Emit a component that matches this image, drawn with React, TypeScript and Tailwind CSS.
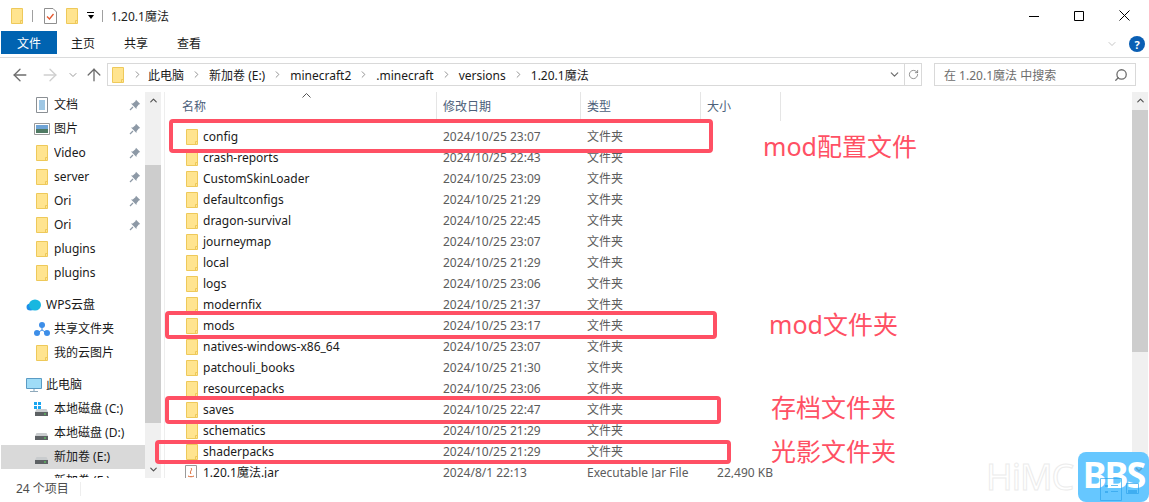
import { ChevronDown, ChevronUp, ArrowLeft, ArrowRight, ArrowUp, ChevronRight, RotateCw, Search } from "lucide-react";

const FONT = "font-['Noto_Sans','Noto_Sans_CJK_SC',sans-serif]";

function Folder({ className = "" }: { className?: string }) {
  return (
    <svg width="12" height="16" viewBox="0 0 12 16" className={`shrink-0 ${className}`}>
      <path d="M.5.5h11v15H.5z" fill="#ffe48f" stroke="#eec95a" />
      <path d="M9.5 15.5v-3h2" fill="none" stroke="#eec95a" />
    </svg>
  );
}

function Pin() {
  return (
    <svg width="12" height="12" viewBox="0 0 12 12" className="shrink-0">
      <path d="M7 .8 11.2 5 9.8 5.6 7.6 8.2 7.4 10 2 4.6 3.8 4.4 6.4 2.2z" fill="#8d99a6" />
      <path d="M4 8 1 11" stroke="#8d99a6" strokeWidth="1.2" />
    </svg>
  );
}

function Drive({ win }: { win?: boolean }) {
  return (
    <svg width="16" height="16" viewBox="0 0 16 16" className="shrink-0">
      {win && <path d="M0 1h3v3H0zM4 1h3v3H4zM0 5h3v3H0zM4 5h3v3H4z" fill="#19a5f0" />}
      <path d="M2.5 8h10l1.5 3H1z" fill="#c9ccce" />
      <path d="M1 11h13v4H1z" fill="#5d6164" />
      <path d="M10 12.5h2v1h-2z" fill="#5be05b" />
    </svg>
  );
}

function NavItem({ label, pinned, icon, active }: { label: string; pinned?: boolean; icon?: React.ReactNode; active?: boolean }) {
  return (
    <div className={`flex h-6 shrink-0 items-center ${active ? "bg-[#d9d9d9]" : ""}`}>
      <div className="ml-[33px] flex w-[20px] shrink-0 items-center">{icon ?? <Folder className="ml-[2px]" />}</div>
      <span className="flex-1 truncate text-[#1a1a1a]">{label}</span>
      {pinned && <div className="mr-[4px]"><Pin /></div>}
    </div>
  );
}

const quick = [
  {
    label: "文档",
    icon: (
      <svg width="12" height="16" viewBox="0 0 12 16" className="ml-[2px]">
        <path d="M.5.5h11v15H.5z" fill="#fff" stroke="#8a8f94" />
        <path d="M3 4h6M3 6h6M3 8h6M3 10h6M3 12h6" stroke="#3f8fc9" />
      </svg>
    ),
  },
  {
    label: "图片",
    icon: (
      <svg width="16" height="12" viewBox="0 0 16 12">
        <path d="M.5.5h15v11H.5z" fill="#fff" stroke="#9a9a9a" />
        <path d="M2 2h12v4H2z" fill="#6fa4d6" />
        <path d="M2 6h12v4H2z" fill="#4f7a63" />
      </svg>
    ),
  },
  { label: "Video" },
  { label: "server" },
  { label: "Ori" },
  { label: "Ori" },
];

const rows = [
  ["config", "2024/10/25 23:07"],
  ["crash-reports", "2024/10/25 22:43"],
  ["CustomSkinLoader", "2024/10/25 23:09"],
  ["defaultconfigs", "2024/10/25 21:29"],
  ["dragon-survival", "2024/10/25 22:45"],
  ["journeymap", "2024/10/25 23:07"],
  ["local", "2024/10/25 21:29"],
  ["logs", "2024/10/25 23:06"],
  ["modernfix", "2024/10/25 21:37"],
  ["mods", "2024/10/25 23:17"],
  ["natives-windows-x86_64", "2024/10/25 23:07"],
  ["patchouli_books", "2024/10/25 21:30"],
  ["resourcepacks", "2024/10/25 23:06"],
  ["saves", "2024/10/25 22:47"],
  ["schematics", "2024/10/25 21:29"],
  ["shaderpacks", "2024/10/25 21:29"],
];

const crumbs = ["此电脑", "新加卷 (E:)", "minecraft2", ".minecraft", "versions", "1.20.1魔法"];

export default function App() {
  return (
    <div className={`relative flex h-[502px] w-[1149px] flex-col overflow-hidden bg-white text-[12px] text-[#1a1a1a] ${FONT}`}>
      {/* title bar */}
      <div className="flex h-[31px] shrink-0 items-center pl-[11px]">
        <Folder />
        <div className="ml-[9px] h-[12px] w-px bg-[#a0a0a0]" />
        <svg width="13" height="16" viewBox="0 0 13 16" className="ml-[11px]">
          <path d="M.5.5h8.5l3.5 3.5v11.500h-12z" fill="#fff" stroke="#8f8f8f" />
          <path d="M3 8.500 5.500 11 9.500 6" fill="none" stroke="#e4572e" strokeWidth="1.3" />
        </svg>
        <Folder className="ml-[9px]" />
        <div className="ml-[9px] flex flex-col items-center">
          <div className="mb-[2px] h-px w-[7px] bg-black" />
          <div className="h-0 w-0 border-x-[3.5px] border-t-[4px] border-x-transparent border-t-black" />
        </div>
        <div className="ml-[8px] h-[12px] w-px bg-[#a0a0a0]" />
        <span className="ml-[8px] mt-[2px] text-[12px] text-[#222]">1.20.1魔法</span>
        <div className="ml-auto mr-[19px] flex items-center gap-[35px] text-black">
          <svg width="10" height="10" viewBox="0 0 10 10"><path d="M0 5.500h10" stroke="currentColor" /></svg>
          <svg width="10" height="10" viewBox="0 0 10 10"><path d="M.5.5h9v9h-9z" fill="none" stroke="currentColor" /></svg>
          <svg width="11" height="11" viewBox="0 0 11 11"><path d="M.5.5l10 10M10.500.5l-10 10" stroke="currentColor" /></svg>
        </div>
      </div>

      {/* ribbon tabs */}
      <div className="flex h-[27px] shrink-0 items-start border-b border-[#dadbdc]">
        <div className="ml-px flex h-[23px] w-[56px] items-center justify-center bg-[#0063b1] pt-[3px] text-white">文件</div>
        <span className="ml-[14px] leading-[26px]">主页</span>
        <span className="ml-[29px] leading-[26px]">共享</span>
        <span className="ml-[29px] leading-[26px]">查看</span>
        <ChevronDown size={12} strokeWidth={1} className="ml-auto mr-[11px] mt-[7px] text-[#8a8a8a]" />
        <div className="mr-[4px] mt-[5px] flex h-4 w-4 items-center justify-center rounded-full bg-[#0a5fb4] text-[11px] font-bold leading-none text-white">?</div>
      </div>

      {/* address bar */}
      <div className="flex h-[34px] shrink-0 items-start pt-[5px]">
        <div className="flex h-[23px] items-center">
          <ArrowLeft size={20} strokeWidth={1.6} className="ml-[10px] text-[#6d6d6d]" />
          <ArrowRight size={20} strokeWidth={1.6} className="ml-[10px] text-[#cfcfcf]" />
          <ChevronDown size={12} strokeWidth={2} className="ml-[7px] text-[#9a9a9a]" />
          <ArrowUp size={20} strokeWidth={1.6} className="ml-[5px] text-[#6d6d6d]" />
        </div>
        <div className="ml-[3px] flex h-[23px] w-[815px] items-center border border-[#d9d9d9] pl-[4px]">
          <Folder />
          {crumbs.map((c, i) => (
            <div key={c} className="flex items-center">
              <ChevronRight size={11} strokeWidth={2} className={`text-[#8a8a8a] ${i === 0 ? "ml-[8px] mr-[5px]" : "mx-[7px]"}`} />
              <span className="pt-[2px]">{c}</span>
            </div>
          ))}
          <ChevronDown size={13} strokeWidth={2.2} className="ml-auto mr-[3px] text-[#6d6d6d]" />
          <div className="flex h-full w-[17px] items-center justify-center border-l border-[#d9d9d9]">
            <RotateCw size={11} strokeWidth={1.6} className="text-[#6d6d6d]" />
          </div>
        </div>
        <div className="ml-[12px] flex h-[23px] w-[202px] items-center justify-between border border-[#d9d9d9] pl-[9px] pr-[7px] text-[#6d6d6d]">
          <span className="pt-[2px]">在 1.20.1魔法 中搜索</span>
          <Search size={14} strokeWidth={2.2} className="-scale-x-100" />
        </div>
      </div>

      {/* main */}
      <div className="flex h-[386px] shrink-0">
        {/* nav pane */}
        <div className="flex w-[145px] shrink-0 flex-col overflow-hidden pl-px pt-px">
          {quick.map((q, i) => (
            <NavItem key={i} label={q.label} icon={q.icon} pinned />
          ))}
          <NavItem label="plugins" />
          <NavItem label="plugins" />
          <div className="h-[8px] shrink-0" />
          <div className="flex h-6 shrink-0 items-center pl-[25px]">
            <svg width="16" height="12" viewBox="0 0 16 12" className="mr-[4px]">
              <ellipse cx="4.500" cy="8" rx="4" ry="3.500" fill="#1f8fe8" />
              <ellipse cx="9" cy="6" rx="6" ry="5.500" fill="#18b7e0" />
            </svg>
            WPS云盘
          </div>
          <NavItem
            label="共享文件夹"
            icon={
              <svg width="16" height="14" viewBox="0 0 16 14">
                <circle cx="8" cy="3" r="3" fill="#3d8ee8" />
                <circle cx="3" cy="11" r="3" fill="#3d8ee8" />
                <circle cx="13" cy="11" r="3" fill="#3d8ee8" />
                <path d="M8 3v5M8 8 3 11M8 8l5 3" fill="none" stroke="#3d8ee8" />
              </svg>
            }
          />
          <NavItem label="我的云图片" />
          <div className="h-[8px] shrink-0" />
          <div className="flex h-6 shrink-0 items-center pl-[25px]">
            <svg width="16" height="15" viewBox="0 0 16 15" className="mr-[4px]">
              <path d="M.5.500h15v10H.5z" fill="#9fdcf7" stroke="#5a9bc4" />
              <path d="M4 13h8v1H4z" fill="#8fa9bb" />
              <path d="M7 11h2v2H7z" fill="#bcd2df" />
            </svg>
            此电脑
          </div>
          <NavItem label="本地磁盘 (C:)" icon={<Drive win />} />
          <NavItem label="本地磁盘 (D:)" icon={<Drive />} />
          <NavItem label="新加卷 (E:)" icon={<Drive />} active />
          <NavItem label="新加卷 (F:)" icon={<Drive />} />
        </div>

        {/* nav scrollbar */}
        <div className="flex h-full w-[16px] shrink-0 flex-col bg-[#f0f0f0]">
          <div className="flex h-[17px] shrink-0 items-center justify-center"><ChevronUp size={11} strokeWidth={2.5} className="text-[#505050]" /></div>
          <div className="mt-[56px] h-[258px] bg-[#cdcdcd]" />
          <div className="mt-auto flex h-[17px] shrink-0 items-center justify-center"><ChevronDown size={11} strokeWidth={2.5} className="text-[#505050]" /></div>
        </div>
        <div className="ml-[3px] h-full w-px shrink-0 bg-[#eeeeee]" />

        {/* file list */}
        <div className="relative flex min-w-0 flex-1 flex-col overflow-hidden">
          <svg width="9" height="5" viewBox="0 0 9 5" className="absolute left-[137px] top-[1px] text-[#555]">
            <path d="M.5 4.500 4.500.5l4 4" fill="none" stroke="currentColor" />
          </svg>
          <div className="mb-[5px] flex h-[29px] shrink-0 items-center text-[#4c607a]">
            <div className="h-full w-[272px] border-r border-[#e5e5e5] pl-[17px] leading-[29px]">名称</div>
            <div className="h-full w-[144px] border-r border-[#e5e5e5] pl-[6px] leading-[29px]">修改日期</div>
            <div className="h-full w-[120px] border-r border-[#e5e5e5] pl-[6px] leading-[29px]">类型</div>
            <div className="h-full w-[80px] border-r border-[#e5e5e5] pl-[6px] leading-[29px]">大小</div>
          </div>
          {rows.map(([name, date]) => (
            <div key={name} className="flex h-[21px] shrink-0 items-center">
              <div className="flex w-[272px] items-center pl-[21px]">
                <Folder />
                <span className="ml-[5px]">{name}</span>
              </div>
              <div className="w-[144px] pl-[6px] text-[#5c5c5c]">{date}</div>
              <div className="w-[120px] pl-[6px] text-[#5c5c5c]">文件夹</div>
            </div>
          ))}
          <div className="flex h-[21px] shrink-0 items-center">
            <div className="flex w-[272px] items-center pl-[18px]">
              <svg width="16" height="16" viewBox="0 0 16 16" className="shrink-0">
                <path d="M2.500.5h11v15h-11z" fill="#fff" stroke="#9a9a9a" />
                <path d="M5 11c2 1 4 1 6 0M8 3c2 2-2 3 0 6" fill="none" stroke="#d9622b" />
              </svg>
              <span className="ml-[4px]">1.20.1魔法.jar</span>
            </div>
            <div className="w-[144px] pl-[6px] text-[#5c5c5c]">2024/8/1 22:13</div>
            <div className="w-[120px] pl-[6px] text-[#5c5c5c]">Executable Jar File</div>
            <div className="w-[72px] text-right text-[#5c5c5c]">22,490 KB</div>
          </div>
        </div>

        {/* list scrollbar */}
        <div className="mr-px flex h-full w-[16px] shrink-0 flex-col bg-[#f0f0f0]">
          <div className="flex h-[17px] shrink-0 items-center justify-center"><ChevronUp size={11} strokeWidth={2.5} className="text-[#505050]" /></div>
          <div className="mt-px h-[242px] bg-[#cdcdcd]" />
        </div>
      </div>

      {/* status bar */}
      <div className="flex h-[24px] shrink-0 items-center pb-[2px] pl-[16px] text-[#4d4d4d]">
        24 个项目
        <div className="ml-[11px] h-[14px] w-px bg-[#eeeeee]" />
      </div>

      {/* red annotations */}
      <div className="absolute left-[169px] top-[119px] h-[34px] w-[544px] rounded-[4px] border-4 border-[#ff5064]" />
      <div className="absolute left-[165px] top-[311px] h-[28px] w-[552px] rounded-[4px] border-4 border-[#ff5064]" />
      <div className="absolute left-[165px] top-[396px] h-[28px] w-[556px] rounded-[4px] border-4 border-[#ff5064]" />
      <div className="absolute left-[155px] top-[440px] h-[24px] w-[576px] rounded-[4px] border-4 border-[#ff5064]" />
      <span className="absolute left-[763px] top-[128px] text-[25px] leading-[36px] text-[#ff5064]">mod配置文件</span>
      <span className="absolute left-[769px] top-[306px] text-[25px] leading-[36px] text-[#ff5064]">mod文件夹</span>
      <span className="absolute left-[771px] top-[389px] text-[25px] leading-[36px] text-[#ff5064]">存档文件夹</span>
      <span className="absolute left-[771px] top-[433px] text-[25px] leading-[36px] text-[#ff5064]">光影文件夹</span>

      {/* watermark */}
      <span className="absolute left-[986px] top-[455px] text-[36px] leading-[44px] tracking-[-1px] text-white [-webkit-text-stroke:1px_#ececec]">HiMC</span>
      <div className="absolute left-[1078px] top-[452px] flex h-[50px] w-[71px] items-center justify-center rounded-[8px] bg-[#66c7ff] pb-[4px] text-[36px] font-bold leading-none tracking-[-2px] text-white">BBS</div>
      <svg width="46" height="36" viewBox="0 0 46 36" className="absolute left-[1100px] top-[466px] text-[#2fa4ec] opacity-70">
        <path d="M.5 12.500h21v22H.5zM26.500 17.500h12v10h-12z" fill="none" stroke="currentColor" />
        <path d="M5 19h3v2H5zM11 19h7v1h-7zM5 25h3v2H5zM11 25h7v1h-7zM28 24h9v3h-9z" fill="currentColor" />
        <path d="M36 2l3 3 3-3" fill="none" stroke="#5b8fb0" strokeWidth="1.500" />
      </svg>
    </div>
  );
}
